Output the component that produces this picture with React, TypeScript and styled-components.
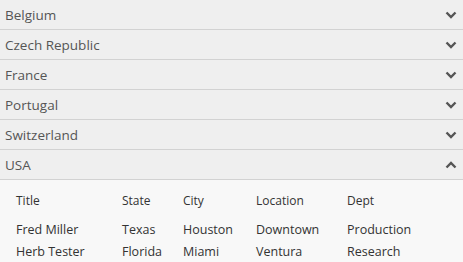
import { useState } from "react";
import styled, { createGlobalStyle } from "styled-components";

const GlobalStyle = createGlobalStyle`
  html, body {
    margin: 0;
    padding: 0;
    background: #f8f8f8;
  }
  body {
    font-family: "Open Sans", "Noto Sans", sans-serif;
    color: #555;
  }
`;

const Accordion = styled.div`
  width: 463px;
`;

const Header = styled.button`
  display: flex;
  align-items: center;
  justify-content: space-between;
  width: 100%;
  height: 30px;
  padding: 0 6px 0 5px;
  border: 0;
  border-bottom: 1px solid #d2d2d2;
  background: #efefef;
  font-family: inherit;
  font-size: 13.5px;
  color: #555;
  text-align: left;
  cursor: pointer;
  box-sizing: border-box;
`;

const Panel = styled.div`
  padding: 8px 0 0 16px;
  background: #f8f8f8;
`;

const Table = styled.table`
  border-collapse: collapse;
  font-size: 12.5px;
  color: #333;
`;

const Th = styled.th<{ $w: number }>`
  width: ${(p) => p.$w}px;
  padding: 4px 0 10px;
  font-weight: normal;
  font-size: 12px;
  text-align: left;
`;

const Td = styled.td`
  padding: 2px 0 2px;
  line-height: 18px;
`;

const Chevron = ({ up }: { up: boolean }) => (
  <svg width="12" height="8" viewBox="0 0 12 8">
    <path
      d={up ? "M1.5 6.5 L6 2 L10.5 6.5" : "M1.5 1.5 L6 6 L10.5 1.5"}
      fill="none"
      stroke="#555"
      strokeWidth="2.4"
    />
  </svg>
);

const countries = ["Belgium", "Czech Republic", "France", "Portugal", "Switzerland", "USA"];

const columns = [
  { key: "title", label: "Title", w: 106 },
  { key: "state", label: "State", w: 61 },
  { key: "city", label: "City", w: 73 },
  { key: "location", label: "Location", w: 91 },
  { key: "dept", label: "Dept", w: 100 },
];

const people = [
  { title: "Fred Miller", state: "Texas", city: "Houston", location: "Downtown", dept: "Production" },
  { title: "Herb Tester", state: "Florida", city: "Miami", location: "Ventura", dept: "Research" },
];

export default function App() {
  const [open, setOpen] = useState("USA");

  return (
    <>
      <GlobalStyle />
      <Accordion>
        {countries.map((c) => (
          <div key={c}>
            <Header onClick={() => setOpen(open === c ? "" : c)}>
              {c}
              <Chevron up={open === c} />
            </Header>
            {open === c && (
              <Panel>
                <Table>
                  <thead>
                    <tr>
                      {columns.map((col) => (
                        <Th key={col.key} $w={col.w}>
                          {col.label}
                        </Th>
                      ))}
                    </tr>
                  </thead>
                  <tbody>
                    {people.map((p) => (
                      <tr key={p.title}>
                        {columns.map((col) => (
                          <Td key={col.key}>{p[col.key as keyof typeof p]}</Td>
                        ))}
                      </tr>
                    ))}
                  </tbody>
                </Table>
              </Panel>
            )}
          </div>
        ))}
      </Accordion>
    </>
  );
}
